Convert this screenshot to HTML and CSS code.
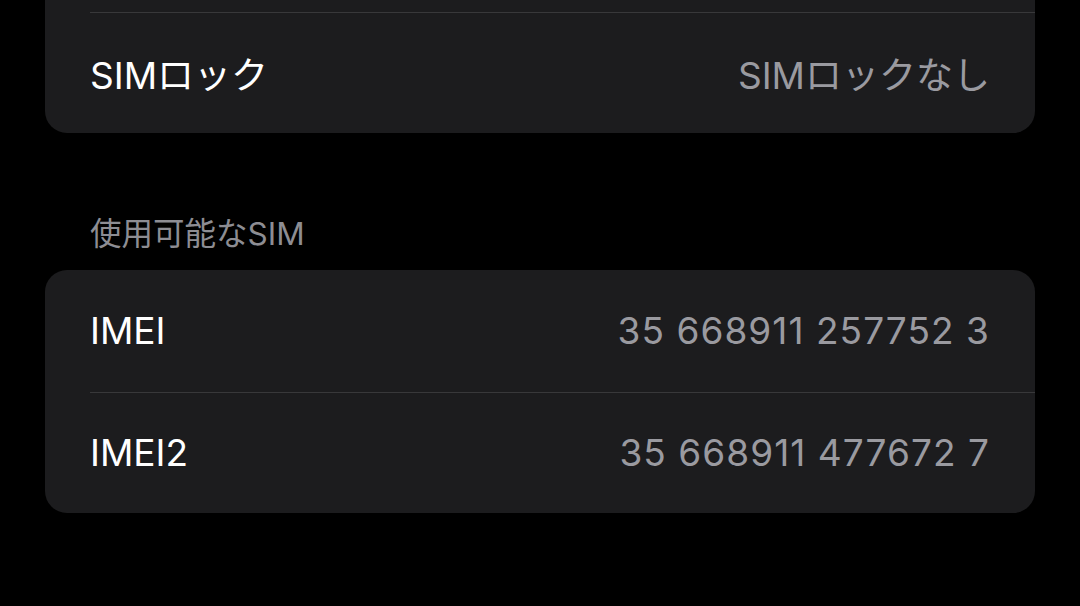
FILE: index.html
```html
<!DOCTYPE html>
<html lang="ja">
<head>
    <meta charset="UTF-8">
    <meta name="viewport" content="width=device-width, initial-scale=1.0">
    <title>情報</title>
    <link rel="stylesheet" href="styles.css">
</head>
<body>

<div class="page">
    <div class="card card-top">
        <div class="row">
            <span class="label">キャリア</span>
            <span class="value"></span>
        </div>
        <div class="row">
            <span class="label">SIMロック</span>
            <span class="value">SIMロックなし</span>
        </div>
    </div>

    <div class="section-header">使用可能なSIM</div>
    <div class="card">
        <div class="row">
            <span class="label">IMEI</span>
            <span class="value digits">35 668911 257752 3</span>
        </div>
        <div class="row">
            <span class="label">IMEI2</span>
            <span class="value digits">35 668911 477672 7</span>
        </div>
    </div>
</div>

</body>
</html>
```

FILE: styles.css
```css
body { margin: 0; background: #000; font-family: Inter, "Noto Sans CJK JP", sans-serif; color: #fff; }
.page { padding: 0 45px; }
.card { background: #1c1c1e; border-radius: 22px; overflow: hidden; }
.card-top { margin-top: -110px; border-top-left-radius: 0; border-top-right-radius: 0; }
.row { display: flex; justify-content: space-between; align-items: center; height: 121px; padding: 0 45px; position: relative; }
.row + .row::before { content: ""; position: absolute; top: 0; left: 45px; right: 0; height: 1px; background: #38383a; }
.row + .row { border-top: 1px solid transparent; }
.card-top .row:first-child { visibility: hidden; }
.label { font-size: 37px; }
.value { font-size: 37px; color: #9a9aa0; }
.digits { letter-spacing: 1.05px; }
.section-header { font-size: 31.5px; line-height: 36px; color: #8d8d93; padding: 83px 45px 18px; }
```
